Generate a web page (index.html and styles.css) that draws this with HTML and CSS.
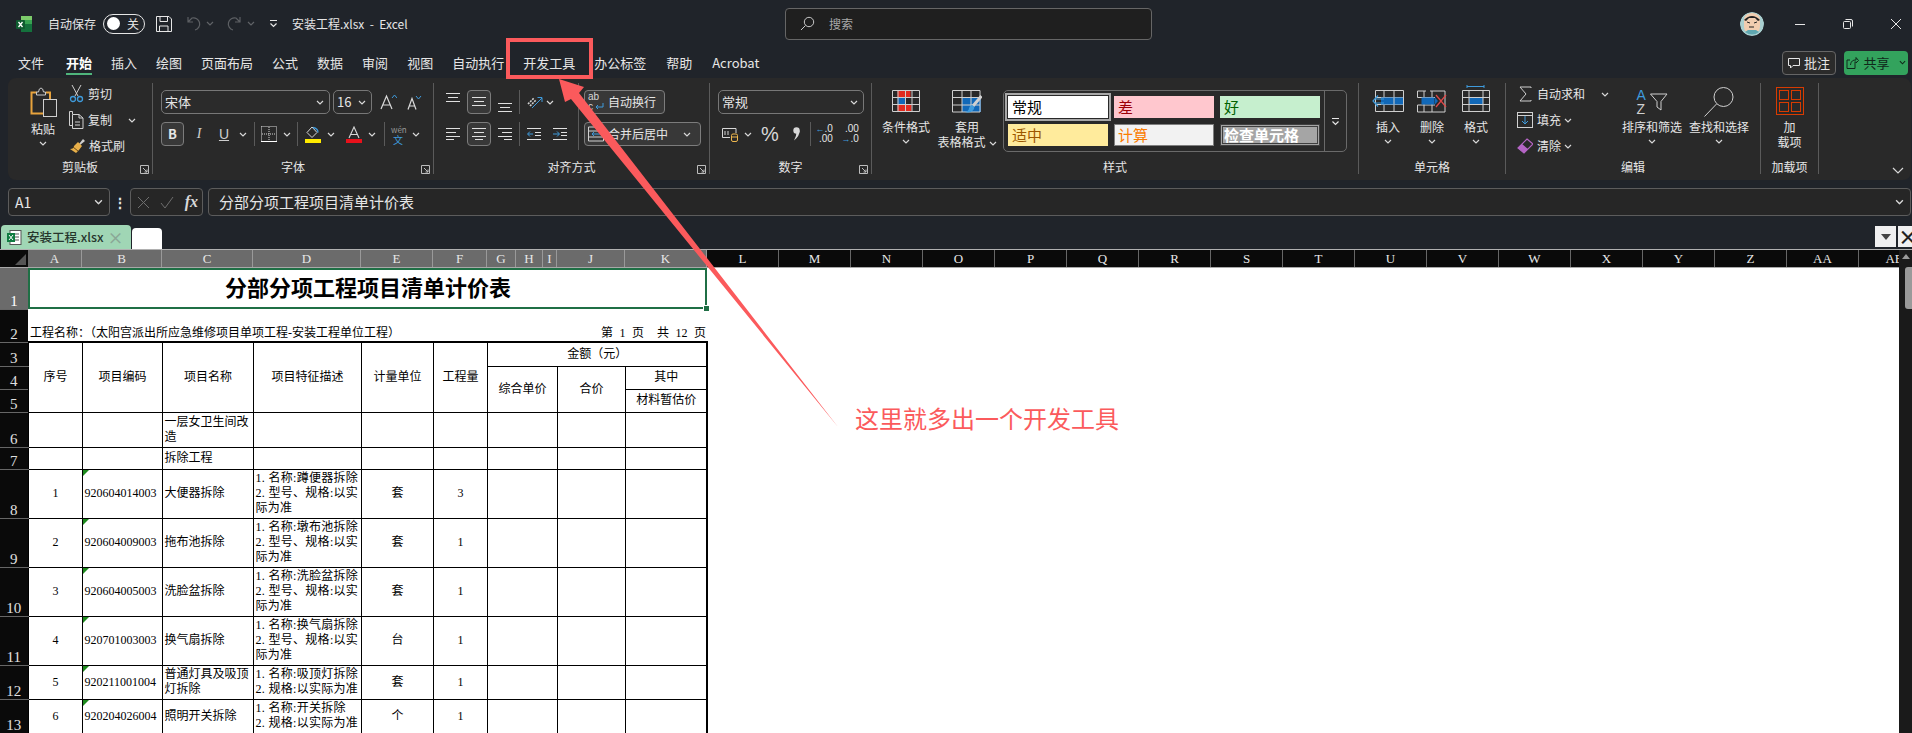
FILE: index.html
```html
<!DOCTYPE html>
<html lang="zh-CN">
<head>
    <meta charset="utf-8">
    <title>安装工程.xlsx - Excel</title>
    <link rel="stylesheet" href="styles.css">
</head>
<body>

<svg class="sprite" aria-hidden="true">
    <symbol id="chev" viewBox="0 0 8 5"><path d="M1 1l3 3 3-3" fill="none" stroke="#d8d8d8" stroke-width="1.2"/></symbol>
    <symbol id="launch" viewBox="0 0 9 9"><path d="M.5 8.500V.5H8.500V8.500H.5M3 3l4 4M7 4.500V7H4.500" fill="none" stroke="#bdbdbd"/></symbol>
</svg>

<!-- title bar -->
<header class="titlebar">
    <div class="title-left">
        <svg class="logo" width="16" height="16" viewBox="0 0 16 16">
            <rect x="5" width="11" height="8" fill="#7ccb6a"/><rect x="5" y="4" width="11" height="8" fill="#37a352"/><rect x="5" y="8" width="11" height="8" fill="#14713c"/><rect y="4" width="9" height="9" rx="1" fill="#0e5c2f"/>
            <path d="M2.500 6l4 5M6.500 6l-4 5" stroke="#fff" stroke-width="1.300"/>
        </svg>
        <span class="ml16">自动保存</span>
        <span class="toggle ml7"><i></i><b>关</b></span>
        <svg class="ml11" width="16" height="16" viewBox="0 0 16 16" fill="none" stroke="#e6e6e6"><path d="M.5.500H13L15.500 3V15.500H.5Z"/><path d="M4 .5V5.500H11.500V.5M3.500 15.500V10H12V15.500"/></svg>
        <svg class="ml15" width="15" height="15" viewBox="0 0 15 15" fill="none" stroke="#5c5f63" stroke-width="1.200"><path d="M1 1V6H6M1 6l4-4A6 6 0 1 1 8 14"/></svg>
        <svg class="ml4" width="8" height="5"><use href="#chev" opacity=".35"/></svg>
        <svg class="ml12" width="15" height="15" viewBox="0 0 15 15" fill="none" stroke="#5c5f63" stroke-width="1.200"><path d="M14 1V6H9M14 6l-4-4A6 6 0 1 0 7 14"/></svg>
        <svg class="ml6" width="8" height="5"><use href="#chev" opacity=".35"/></svg>
        <svg class="ml14" width="9" height="9" viewBox="0 0 9 9" fill="none" stroke="#e6e6e6" stroke-width="1.200"><path d="M1 1.500H8M1.500 4.500l3 3 3-3"/></svg>
        <span class="ml14">安装工程.xlsx &nbsp;-&nbsp; Excel</span>
    </div>
    <div class="search">
        <svg width="15" height="15" viewBox="0 0 15 15" fill="none" stroke="#c8c8c8"><circle cx="9" cy="6" r="4.700"/><path d="M5.500 9.500L1 14"/></svg>
        <span>搜索</span>
    </div>
    <div class="title-right">
        <svg class="avatar" width="24" height="24" viewBox="0 0 24 24">
            <circle cx="12" cy="12" r="12" fill="#a9cfd0"/><path d="M4 7a8 6 0 0 1 16 0v8a8 7 0 0 1-16 0Z" fill="#f1cdb0"/><path d="M4 8q8-8 16 0l-2 1-3-3-6 0-3 3Z" fill="#222"/>
            <path d="M7 10l3 1M17 10l-3 1M9 15h5" stroke="#222"/><path d="M5 20q7 5 14 0l-3-2H8Z" fill="#5fa7b0"/>
        </svg>
        <div class="winbtn"><svg width="10" height="10"><path d="M0 5.500H10" stroke="#e6e6e6"/></svg></div>
        <div class="winbtn"><svg width="10" height="10" fill="none" stroke="#e6e6e6"><rect x=".5" y="2.500" width="7" height="7" rx="1"/><path d="M2.500 .5H8A1.500 1.500 0 0 1 9.500 2V7.500"/></svg></div>
        <div class="winbtn"><svg width="10" height="10" stroke="#e6e6e6"><path d="M0 0l10 10M10 0L0 10"/></svg></div>
    </div>
</header>

<!-- tabs -->
<nav class="tabbar">
    <a class="first">文件</a>
    <a class="active">开始</a>
    <a>插入</a>
    <a>绘图</a>
    <a>页面布局</a>
    <a>公式</a>
    <a>数据</a>
    <a>审阅</a>
    <a>视图</a>
    <a>自动执行</a>
    <a>开发工具</a>
    <a>办公标签</a>
    <a class="late">帮助</a>
    <a class="late">Acrobat</a>
    <div class="tab-actions">
        <button class="note">
            <svg width="12" height="12" viewBox="0 0 12 12" fill="none" stroke="#e6e6e6"><path d="M.5 1.500H11.500V8.500H5L2.500 11V8.500H.5Z"/></svg>批注
        </button>
        <button class="share">
            <svg width="13" height="13" viewBox="0 0 13 13" fill="none" stroke="#10281a"><path d="M9 5.500V12.500H1V4H4M4.500 9C5 5 7 4 10 4V1.500L12.500 4.500 10 7V5.500"/></svg>共享<svg class="ml5" width="7" height="5" viewBox="0 0 8 5"><path d="M1 1l3 3 3-3" fill="none" stroke="#10281a" stroke-width="1.200"/></svg>
        </button>
    </div>
</nav>

<!-- ribbon -->
<section class="ribbon">
    <div class="group w-clip">
        <div class="gbody pl21">
            <div class="paste">
                <svg width="27" height="30" viewBox="0 0 27 30" fill="none">
                    <path d="M7 5.500H1.500V26.500H13M16 5.500H20V12" stroke="#e8a33d" stroke-width="2"/>
                    <path d="M6.500 8V5H8.500Q9 1 11 1T13.500 5H15.500V8Z" stroke="#c9c9c9" stroke-width="1"/>
                    <rect x="13.500" y="12.500" width="13" height="17" stroke="#d0d0d0" fill="#292929"/>
                </svg>
                <span class="mt4">粘贴</span>
                <svg class="mt4" width="8" height="5"><use href="#chev"/></svg>
            </div>
            <div class="smalls ml12">
                <div class="small">
                    <svg width="15" height="18" viewBox="0 0 15 18" fill="none"><path d="M3 0l6 11M12 0L6 11" stroke="#cfcfcf"/><circle cx="4" cy="14" r="2.500" stroke="#3f9bdc" stroke-width="1.300"/><circle cx="11" cy="14" r="2.500" stroke="#3f9bdc" stroke-width="1.300"/></svg>
                    <span class="ml4">剪切</span>
                </div>
                <div class="small">
                    <svg width="15" height="18" viewBox="0 0 15 18" fill="none" stroke="#d0d0d0"><path d="M3.500 3V.5H.5V14.500H3"/><path d="M3.500 3.500H10L14 7V17.500H3.500Z"/><path d="M10 3.500V7H14M6 11H11M6 14H11"/></svg>
                    <span class="ml4">复制</span>
                    <svg class="ml16" width="8" height="5"><use href="#chev"/></svg>
                </div>
                <div class="small">
                    <svg width="16" height="16" viewBox="0 0 16 16"><path d="M10 6l4-5 2 2-5 4Z" fill="#cfcfcf"/><path d="M9 4l4 4-3 4-3 3-6-4q4 0 4-3Z" fill="#e8b04a"/><path d="M4 9l5 4" stroke="#6d4a12"/></svg>
                    <span class="ml4">格式刷</span>
                </div>
            </div>
        </div>
        <div class="glabel">剪贴板</div>
        <svg class="launcher" width="9" height="9"><use href="#launch"/></svg>
    </div>

    <div class="group w-font">
        <div class="rows pl8">
            <div class="row">
                <div class="select w169">宋体<svg width="8" height="5"><use href="#chev"/></svg></div>
                <div class="select w39 ml3">16<svg width="8" height="5"><use href="#chev"/></svg></div>
                <svg class="ml8" width="17" height="16" viewBox="0 0 17 16" fill="none"><path d="M1 15L6.500 2 12 15M3 11H10" stroke="#dadada" stroke-width="1.200"/><path d="M12 4l2.500-3 2.500 3" stroke="#3f9bdc"/></svg>
                <svg class="ml10" width="15" height="15" viewBox="0 0 15 15" fill="none"><path d="M1 14.500L5 3.500 9 14.500M2.500 11H7.500" stroke="#dadada" stroke-width="1.200"/><path d="M9 1l2.500 3L14 1" stroke="#3f9bdc"/></svg>
            </div>
            <div class="row">
                <div class="tbtn w23 bold">B</div>
                <div class="ico w10 ml10 ital">I</div>
                <div class="ico w12 ml14 under">U</div>
                <svg class="ml9" width="8" height="5"><use href="#chev"/></svg>
                <i class="sep ml7"></i>
                <svg class="ml6" width="16" height="16" viewBox="0 0 16 16" fill="none" stroke="#d8d8d8"><path d="M.5.500H15.500V15M.5.500V15" stroke-dasharray="1 1"/><path d="M8 1V15M1 8H15" stroke-dasharray="1 1"/><path d="M0 15.500H16" stroke="#fff"/></svg>
                <svg class="ml6" width="8" height="5"><use href="#chev"/></svg>
                <i class="sep ml6"></i>
                <svg class="ml7" width="16" height="17" viewBox="0 0 16 17" fill="none"><path d="M7 1L2 6.500 7 11.500 12 6.500Z" stroke="#d8d8d8"/><path d="M8 1.500q5 1 5 5" stroke="#3f9bdc" stroke-width="1.300"/><rect y="13" width="16" height="4" fill="#ffeb00"/></svg>
                <svg class="ml6" width="8" height="5"><use href="#chev"/></svg>
                <svg class="ml11" width="16" height="17" viewBox="0 0 16 17" fill="none"><path d="M3 12L8 1 13 12M4.500 8.500H11.500" stroke="#d8d8d8" stroke-width="1.100"/><rect y="13" width="16" height="4" fill="#e8111b"/></svg>
                <svg class="ml6" width="8" height="5"><use href="#chev"/></svg>
                <i class="sep ml8"></i>
                <div class="wen ml6"><small>wén</small><b>文</b></div>
                <svg class="ml7" width="8" height="5"><use href="#chev"/></svg>
            </div>
        </div>
        <div class="glabel">字体</div>
        <svg class="launcher" width="9" height="9"><use href="#launch"/></svg>
    </div>

    <div class="group w-align">
        <div class="gbody">
            <div class="rows w145 pl12">
                <div class="row">
                    <svg class="self-top" width="14" height="10" stroke="#e0e0e0"><path d="M0 .5H14M2 4.500H12M0 8.500H14"/></svg>
                    <div class="tbtn w24 ml7"><svg width="14" height="10" stroke="#e0e0e0"><path d="M0 .5H14M2 4.500H12M0 8.500H14"/></svg></div>
                    <svg class="self-bot ml7" width="14" height="10" stroke="#e0e0e0"><path d="M0 .5H14M2 4.500H12M0 8.500H14"/></svg>
                    <i class="sep ml7"></i>
                    <svg class="ml7" width="16" height="16" viewBox="0 0 16 16" fill="none"><path d="M1 10l6-6M3 12l6-6" stroke="#d0d0d0" stroke-width="1.600" stroke-dasharray="2 1"/><path d="M5 14L15 4M10.500 3.500H15V8" stroke="#3f9bdc"/></svg>
                    <svg class="ml3" width="8" height="5"><use href="#chev"/></svg>
                </div>
                <div class="row">
                    <svg width="14" height="12" stroke="#e0e0e0"><path d="M0 .5H14M0 4.500H10M0 8.500H14M0 11.500H8"/></svg>
                    <div class="tbtn w24 ml7"><svg width="14" height="12" stroke="#e0e0e0"><path d="M0 .5H14M2 4.500H12M0 8.500H14M3 11.500H11"/></svg></div>
                    <svg class="ml7" width="14" height="12" stroke="#e0e0e0"><path d="M0 .5H14M4 4.500H14M0 8.500H14M6 11.500H14"/></svg>
                    <i class="sep ml7"></i>
                    <svg class="ml7" width="14" height="12" fill="none" stroke="#e0e0e0"><path d="M0 .5H14M8 4.500H14M8 7.500H14M0 11.500H14"/><path d="M6 6H1M3 3.500L.5 6 3 8.500" stroke="#3f9bdc"/></svg>
                    <svg class="ml12" width="14" height="12" fill="none" stroke="#e0e0e0"><path d="M0 .5H14M8 4.500H14M8 7.500H14M0 11.500H14"/><path d="M0 6H6M4 3.500L6.500 6 4 8.500" stroke="#3f9bdc"/></svg>
                </div>
            </div>
            <div class="rows wrap-col">
                <div class="row">
                    <div class="tbtn w81 txt">
                        <span class="wrap-ico"><span>ab</span><span>c</span><svg width="9" height="8" viewBox="0 0 9 8" fill="none"><path d="M8 0V4H1M3 2L1 4 3 6" stroke="#3f9bdc"/></svg></span>
                        自动换行
                    </div>
                </div>
                <div class="row">
                    <div class="tbtn w117 txt">
                        <svg width="16" height="16" viewBox="0 0 16 16" fill="none" stroke="#d0d0d0"><path d="M.5 1V15H15.500V1Z"/><path d="M1 5H15M1 11H15"/><path d="M13 8H4M6 6L4 8 6 10" stroke="#3f9bdc"/></svg>
                        合并后居中<svg class="ml11" width="8" height="5"><use href="#chev"/></svg>
                    </div>
                </div>
            </div>
        </div>
        <div class="glabel">对齐方式</div>
        <svg class="launcher" width="9" height="9"><use href="#launch"/></svg>
    </div>

    <div class="group w-num">
        <div class="rows pl8">
            <div class="row">
                <div class="select w146">常规<svg width="8" height="5"><use href="#chev"/></svg></div>
            </div>
            <div class="row">
                <svg class="ml4" width="16" height="16" viewBox="0 0 16 16" fill="none"><path d="M8 11.500H.5V2.500H14V7" stroke="#d8d8d8"/><path d="M3 5V9M6 5V9" stroke="#d8d8d8"/><rect x="9.500" y="8" width="6" height="7.500" rx="1.500" stroke="#efb84f" fill="#292929"/><path d="M9.500 11H15.500" stroke="#efb84f"/></svg>
                <svg class="ml6" width="8" height="5"><use href="#chev"/></svg>
                <span class="percent ml9">%</span>
                <svg class="ml13" width="8" height="14" viewBox="0 0 8 14"><circle cx="4.500" cy="3.500" r="3.200" fill="#d8d8d8"/><path d="M7.700 3.500Q7.700 9 2 13.500 4.500 9 4.500 5Z" fill="#d8d8d8"/></svg>
                <i class="sep ml10"></i>
                <div class="dec ml6"><span><em>←</em>.0</span><span>.00</span></div>
                <div class="dec ml10"><span>.00</span><span><em>→</em>.0</span></div>
            </div>
        </div>
        <div class="glabel">数字</div>
        <svg class="launcher" width="9" height="9"><use href="#launch"/></svg>
    </div>

    <div class="group w-style">
        <div class="gbody pl10">
            <div class="big w48">
                <div class="icon-box">
                    <svg width="28" height="22" viewBox="0 0 28 22" fill="none">
                        <rect x="5.500" y=".5" width="13" height="6.500" fill="#e12b1f"/><rect x="5.500" y="7.500" width="8" height="6.500" fill="#1168b8"/><rect x="5.500" y="14.500" width="14" height="7" fill="#e12b1f"/>
                        <path d="M.5.500H27.500V21.500H.5ZM.5 7.500H27.500M.5 14.500H27.500M6 .5V21.500M13.500 .5V21.500M20 .5V21.500" stroke="#cfcfcf"/>
                    </svg>
                </div>
                <span>条件格式</span>
                <svg class="mt5" width="8" height="5"><use href="#chev"/></svg>
            </div>
            <div class="big w64 ml5">
                <div class="icon-box">
                    <svg width="30" height="27" viewBox="0 0 30 27" fill="none">
                        <rect x="10" y="8" width="19" height="14" fill="#1168b8"/>
                        <path d="M.5.500H28V22H.5ZM.5 7.500H28M.5 15H28M10 .5V22M19 .5V22" stroke="#cfcfcf"/>
                        <path d="M29.500 6L21 16" stroke="#d0d0d0" stroke-width="3"/><path d="M20 15q3 1 2 4-3 5-9 3 4-1 4-4 1-3 3-3Z" fill="#3f9bdc"/>
                    </svg>
                </div>
                <span>套用</span>
                <span>表格格式<svg class="ml3 va" width="8" height="5"><use href="#chev"/></svg></span>
            </div>
            <div class="gallery ml4">
                <div class="gallery-grid">
                    <div class="sty sty-normal">常规</div>
                    <div class="sty sty-bad">差</div>
                    <div class="sty sty-good">好</div>
                    <div class="sty sty-mid">适中</div>
                    <div class="sty sty-calc">计算</div>
                    <div class="sty sty-check">检查单元格</div>
                </div>
                <div class="gallery-more">
                    <svg width="9" height="9" viewBox="0 0 9 9" fill="none" stroke="#e6e6e6" stroke-width="1.200"><path d="M1 1.500H8M1.500 4.500l3 3 3-3"/></svg>
                </div>
            </div>
        </div>
        <div class="glabel">样式</div>
    </div>

    <div class="group w-cell">
        <div class="gbody pl7">
            <div class="big w44">
                <div class="icon-box">
                    <svg width="32" height="22" viewBox="0 0 32 22" fill="none">
                        <path d="M3.500.5H31.500V21.500H3.500ZM3.500 7.500H31.500M3.500 14.500H31.500M12 .5V21.500M22 .5V21.500" stroke="#cfcfcf"/>
                        <rect x="9" y="7.500" width="22" height="7" fill="#1168b8"/><path d="M22 7.500V14.500" stroke="#cfcfcf"/>
                        <path d="M12 9H3M12 13H3M6 5.500L1 11 6 16.500" stroke="#3f9bdc" stroke-width="1.200"/>
                    </svg>
                </div>
                <span>插入</span>
                <svg class="mt5" width="8" height="5"><use href="#chev"/></svg>
            </div>
            <div class="big w44">
                <div class="icon-box">
                    <svg width="30" height="24" viewBox="0 0 30 24" fill="none">
                        <path d="M.5 1H9M13 1H28M.5 1V7.500M.5 15V22H28V1M.5 7.500H18M.5 15H18M7 1V22M15 1V22" stroke="#cfcfcf"/>
                        <rect x="4.500" y="7.500" width="13" height="7" fill="#1168b8"/><path d="M18 7.500L21 11 18 14.500Z" fill="#1168b8"/>
                        <path d="M19 5l10 12M29 5L19 17" stroke="#e04848" stroke-width="1.200"/>
                    </svg>
                </div>
                <span>删除</span>
                <svg class="mt5" width="8" height="5"><use href="#chev"/></svg>
            </div>
            <div class="big w44">
                <div class="icon-box">
                    <svg class="up5" width="28" height="27" viewBox="0 0 28 27" fill="none">
                        <path d="M5 1.500H22M5 0V3M22 0V3" stroke="#3f9bdc"/>
                        <rect x="7" y="12.500" width="14" height="7" fill="#1168b8"/>
                        <path d="M.5 5.500H27.500V26.500H.5ZM.5 12.500H27.500M.5 19.500H27.500M7 5.500V26.500M21 5.500V26.500" stroke="#cfcfcf"/>
                    </svg>
                </div>
                <span>格式</span>
                <svg class="mt5" width="8" height="5"><use href="#chev"/></svg>
            </div>
        </div>
        <div class="glabel">单元格</div>
    </div>

    <div class="group w-edit">
        <div class="gbody pl11">
            <div class="smalls w94">
                <div class="small">
                    <svg width="16" height="16" viewBox="0 0 16 16" fill="none" stroke="#d0d0d0"><path d="M14 2V1H3L9 8 3 15H14V14"/></svg>
                    <span class="ml4">自动求和</span>
                    <svg class="ml16" width="8" height="5"><use href="#chev"/></svg>
                </div>
                <div class="small">
                    <svg width="16" height="16" viewBox="0 0 16 16" fill="none"><rect x=".5" y=".5" width="15" height="15" stroke="#d0d0d0"/><path d="M8 4V12M5 9l3 3 3-3" stroke="#3f9bdc"/><path d="M.5 3.500H15.500" stroke="#d0d0d0"/></svg>
                    <span class="ml4">填充</span>
                    <svg class="ml3" width="8" height="5"><use href="#chev"/></svg>
                </div>
                <div class="small">
                    <svg width="16" height="16" viewBox="0 0 16 16"><path d="M10 1L16 6 7 15 1 10Z" fill="none" stroke="#b565c5" stroke-width="1.200"/><path d="M5 6L11 11 7 15 1 10Z" fill="#b565c5"/></svg>
                    <span class="ml4">清除</span>
                    <svg class="ml3" width="8" height="5"><use href="#chev"/></svg>
                </div>
            </div>
            <div class="big w60 ml11">
                <div class="icon-box sort-ico">
                    <span class="az"><b>A</b><i>Z</i></span>
                    <svg width="18" height="18" viewBox="0 0 18 18" fill="none"><path d="M.5 1H17L11 8.500V17L7 14V8.500Z" stroke="#d0d0d0"/></svg>
                </div>
                <span>排序和筛选</span>
                <svg class="mt5" width="8" height="5"><use href="#chev"/></svg>
            </div>
            <div class="big w60 ml7">
                <div class="icon-box">
                    <svg class="up3" width="30" height="30" viewBox="0 0 30 30" fill="none" stroke="#d0d0d0"><circle cx="19.500" cy="10" r="9.500"/><path d="M12.500 17L.5 29.500"/></svg>
                </div>
                <span>查找和选择</span>
                <svg class="mt5" width="8" height="5"><use href="#chev"/></svg>
            </div>
        </div>
        <div class="glabel">编辑</div>
    </div>

    <div class="group w-add">
        <div class="gbody center">
            <div class="big">
                <div class="icon-box">
                    <svg class="up3" width="28" height="28" viewBox="0 0 28 28" fill="none" stroke="#d83b01"><rect x=".5" y=".5" width="27" height="27" stroke-width="1"/><rect x="3.500" y="3.500" width="9" height="9"/><rect x="15.500" y="3.500" width="9" height="9"/><rect x="3.500" y="15.500" width="9" height="9"/><rect x="15.500" y="15.500" width="9" height="9"/></svg>
                </div>
                <span>加</span>
                <span>载项</span>
            </div>
        </div>
        <div class="glabel">加载项</div>
    </div>

    <svg class="collapse" width="12" height="7" viewBox="0 0 12 7"><path d="M1 1l5 5 5-5" fill="none" stroke="#d8d8d8" stroke-width="1.2"/></svg>
</section>

<!-- formula bar -->
<div class="formula-bar">
    <div class="namebox">A1<svg width="9" height="6" viewBox="0 0 8 5"><use href="#chev"/></svg></div>
    <div class="dots">⋮</div>
    <div class="fx-box">
        <svg width="13" height="13" stroke="#6e6e6e"><path d="M1 1l11 11M12 1L1 12"/></svg>
        <svg width="14" height="13" fill="none" stroke="#6e6e6e"><path d="M1 7l4 5 8-11"/></svg>
        <span>fx</span>
    </div>
    <div class="formula">分部分项工程项目清单计价表<svg width="9" height="6" viewBox="0 0 8 5"><use href="#chev"/></svg></div>
</div>

<!-- workbook tabs -->
<div class="doc-tabs">
    <div class="doc-tab">
        <svg width="15" height="15" viewBox="0 0 15 15"><rect x="3" y=".5" width="11" height="14" fill="#fff" stroke="#555"/><path d="M6 4H12M6 7H12M6 10H12" stroke="#555"/><rect y="3" width="8" height="9" fill="#107c41"/><path d="M2 5l4 5M6 5l-4 5" stroke="#fff"/></svg>
        <span>安装工程.xlsx</span>
        <i>×</i>
    </div>
    <div class="doc-tab-new"></div>
    <div class="doc-tools">
        <div class="doc-btn"><span></span></div>
        <div class="doc-btn x">×</div>
    </div>
</div>

<!-- sheet -->
<main class="sheet">
    <div class="sheet-main">
        <div class="col-head">
            <div class="corner"></div>
            <div class="col sel ca">A</div><div class="col sel cb">B</div><div class="col sel cc">C</div><div class="col sel cd">D</div><div class="col sel ce">E</div><div class="col sel cf">F</div><div class="col sel cg">G</div><div class="col sel ch">H</div><div class="col sel ci">I</div><div class="col sel cj">J</div><div class="col sel ck">K</div>
            <div class="col">L</div><div class="col">M</div><div class="col">N</div><div class="col">O</div><div class="col">P</div><div class="col">Q</div><div class="col">R</div><div class="col">S</div><div class="col">T</div><div class="col">U</div><div class="col">V</div><div class="col">W</div><div class="col">X</div><div class="col">Y</div><div class="col">Z</div><div class="col">AA</div><div class="col">AB</div>
        </div>
        <table class="grid">
            <colgroup>
                <col class="c-head"><col class="c-a"><col class="c-b"><col class="c-c"><col class="c-d"><col class="c-e"><col class="c-f"><col class="c-g"><col class="c-h"><col class="c-i"><col class="c-j"><col class="c-k"><col>
            </colgroup>
            <tr class="r1"><th class="sel">1</th><td colspan="11" class="title-cell">分部分项工程项目清单计价表<i class="handle"></i></td><td></td></tr>
            <tr class="r2"><th>2</th><td colspan="9" class="info">工程名称：（太阳宫派出所应急维修项目单项工程-安装工程单位工程）</td><td colspan="2" class="info right">第 1 页 &nbsp;共 12 页</td><td></td></tr>
            <tr class="r3"><th>3</th>
                <td class="b top ctr" rowspan="3">序号</td><td class="b top ctr" rowspan="3">项目编码</td><td class="b top ctr" rowspan="3">项目名称</td><td class="b top ctr" rowspan="3">项目特征描述</td><td class="b top ctr" rowspan="3">计量单位</td><td class="b top ctr" rowspan="3">工程量</td>
                <td class="b top ctr end" colspan="5">金额（元）</td><td></td></tr>
            <tr class="r4"><th>4</th><td class="b ctr" colspan="3" rowspan="2">综合单价</td><td class="b ctr" rowspan="2">合价</td><td class="b ctr end">其中</td><td></td></tr>
            <tr class="r5"><th>5</th><td class="b ctr end">材料暂估价</td><td></td></tr>
            <tr class="r6"><th>6</th><td class="b"></td><td class="b"></td><td class="b">一层女卫生间改造</td><td class="b"></td><td class="b"></td><td class="b"></td><td class="b" colspan="3"></td><td class="b"></td><td class="b end"></td><td></td></tr>
            <tr class="r7"><th>7</th><td class="b"></td><td class="b"></td><td class="b">拆除工程</td><td class="b"></td><td class="b"></td><td class="b"></td><td class="b" colspan="3"></td><td class="b"></td><td class="b end"></td><td></td></tr>
            <tr class="r8"><th>8</th><td class="b ctr">1</td><td class="b code">920604014003</td><td class="b">大便器拆除</td><td class="b desc">1. 名称:蹲便器拆除<br>2. 型号、规格:以实<br>际为准</td><td class="b ctr">套</td><td class="b ctr">3</td><td class="b" colspan="3"></td><td class="b"></td><td class="b end"></td><td></td></tr>
            <tr class="r8"><th>9</th><td class="b ctr">2</td><td class="b code">920604009003</td><td class="b">拖布池拆除</td><td class="b desc">1. 名称:墩布池拆除<br>2. 型号、规格:以实<br>际为准</td><td class="b ctr">套</td><td class="b ctr">1</td><td class="b" colspan="3"></td><td class="b"></td><td class="b end"></td><td></td></tr>
            <tr class="r8"><th>10</th><td class="b ctr">3</td><td class="b code">920604005003</td><td class="b">洗脸盆拆除</td><td class="b desc">1. 名称:洗脸盆拆除<br>2. 型号、规格:以实<br>际为准</td><td class="b ctr">套</td><td class="b ctr">1</td><td class="b" colspan="3"></td><td class="b"></td><td class="b end"></td><td></td></tr>
            <tr class="r8"><th>11</th><td class="b ctr">4</td><td class="b code">920701003003</td><td class="b">换气扇拆除</td><td class="b desc">1. 名称:换气扇拆除<br>2. 型号、规格:以实<br>际为准</td><td class="b ctr">台</td><td class="b ctr">1</td><td class="b" colspan="3"></td><td class="b"></td><td class="b end"></td><td></td></tr>
            <tr class="r12"><th>12</th><td class="b ctr">5</td><td class="b code">920211001004</td><td class="b">普通灯具及吸顶灯拆除</td><td class="b desc">1. 名称:吸顶灯拆除<br>2. 规格:以实际为准</td><td class="b ctr">套</td><td class="b ctr">1</td><td class="b" colspan="3"></td><td class="b"></td><td class="b end"></td><td></td></tr>
            <tr class="r12"><th>13</th><td class="b ctr">6</td><td class="b code">920204026004</td><td class="b">照明开关拆除</td><td class="b desc">1. 名称:开关拆除<br>2. 规格:以实际为准</td><td class="b ctr">个</td><td class="b ctr">1</td><td class="b" colspan="3"></td><td class="b"></td><td class="b end"></td><td></td></tr>
        </table>
    </div>
    <div class="scrollbar"><i class="up"></i><i class="thumb"></i></div>
</main>

<!-- annotation drawn on top of the screenshot -->
<div class="mark-box"></div>
<svg class="mark-arrow" width="1912" height="733" viewBox="0 0 1912 733">
    <polygon points="559,79 584,87 579,93 838,427 571,99 565,102" fill="#fb5a5c"/>
</svg>
<div class="mark-text">这里就多出一个开发工具</div>

</body>
</html>
```

FILE: styles.css
```css
* {
    box-sizing: border-box;
}

html, body {
    margin: 0;
    padding: 0;
    width: 1912px;
    height: 733px;
    overflow: hidden;
}

body {
    position: relative;
    background-color: #20242a;
    color: #e6e6e6;
    font-family: "Noto Sans CJK SC", "Noto Sans", sans-serif;
    font-size: 12px;
    line-height: 16px;
}

svg {
    display: block;
    flex-shrink: 0;
}

.sprite {
    width: 0;
    height: 0;
    position: absolute;
}

/* small spacing helpers */
.ml3 { margin-left: 3px; }
.ml4 { margin-left: 4px; }
.ml5 { margin-left: 5px; }
.ml6 { margin-left: 6px; }
.ml7 { margin-left: 7px; }
.ml8 { margin-left: 8px; }
.ml9 { margin-left: 9px; }
.ml10 { margin-left: 10px; }
.ml11 { margin-left: 11px; }
.ml12 { margin-left: 12px; }
.ml13 { margin-left: 13px; }
.ml14 { margin-left: 14px; }
.ml15 { margin-left: 15px; }
.ml16 { margin-left: 16px; }
.mt4 { margin-top: 4px; }
.mt5 { margin-top: 5px; }
.pl7 { padding-left: 7px; }
.pl8 { padding-left: 8px; }
.pl10 { padding-left: 10px; }
.pl11 { padding-left: 11px; }
.pl12 { padding-left: 12px; }
.pl21 { padding-left: 21px; }
.w10 { width: 10px; }
.w12 { width: 12px; }
.w23 { width: 23px; }
.w24 { width: 24px; }
.w39 { width: 39px; }
.w44 { width: 44px; }
.w48 { width: 48px; }
.w60 { width: 60px; }
.w64 { width: 64px; }
.w81 { width: 81px; }
.w94 { width: 94px; }
.w117 { width: 117px; }
.w145 { width: 145px; }
.w146 { width: 146px; }
.w169 { width: 169px; }
.up3 { margin-top: -3px; }
.up5 { margin-top: -5px; }
.va { display: inline-block; vertical-align: middle; }

/* title bar */
.titlebar {
    display: flex;
    align-items: center;
    height: 47px;
}

.title-left {
    display: flex;
    align-items: center;
    width: 785px;
    padding-left: 16px;
}

.toggle {
    display: flex;
    align-items: center;
    justify-content: space-between;
    width: 42px;
    height: 20px;
    padding: 0 5px 0 3px;
    border: 1px solid #e6e6e6;
    border-radius: 10px;
}

.toggle i {
    width: 13px;
    height: 13px;
    background-color: #fff;
    border-radius: 50%;
}

.toggle b {
    font-weight: normal;
}

.search {
    display: flex;
    align-items: center;
    gap: 14px;
    width: 367px;
    height: 32px;
    padding-left: 14px;
    background-color: #1f1f1f;
    border: 1px solid #666;
    border-radius: 4px;
    color: #a8a8a8;
}

.title-right {
    flex: 1;
    display: flex;
    align-items: center;
    justify-content: flex-end;
    margin-right: -8px;
}

.avatar {
    margin-right: 12px;
    border-radius: 50%;
}

.winbtn {
    display: flex;
    align-items: center;
    justify-content: center;
    width: 48px;
    height: 32px;
}

/* tabs */
.tabbar {
    display: flex;
    align-items: center;
    gap: 19px;
    height: 31px;
    padding-left: 18px;
    font-size: 13px;
    line-height: 20px;
}

.tabbar a {
    position: relative;
    white-space: nowrap;
}

.tabbar .first {
    margin-right: 3px;
}

.tabbar .late {
    margin-left: 1px;
}

.tabbar .active {
    font-weight: bold;
    color: #fff;
}

.tabbar .active::after {
    content: "";
    position: absolute;
    left: 0;
    right: 0;
    bottom: -2px;
    height: 2px;
    background-color: #4fb57c;
}

.tab-actions {
    display: flex;
    gap: 8px;
    margin-left: auto;
    margin-right: 4px;
}

.tab-actions button {
    display: flex;
    align-items: center;
    justify-content: center;
    gap: 4px;
    height: 24px;
    border-radius: 4px;
    font: inherit;
}

.note {
    width: 54px;
    padding: 0;
    background-color: #2b2b2b;
    border: 1px solid #666;
    color: #e6e6e6;
}

.share {
    width: 64px;
    padding: 0;
    background-color: #33a35d;
    border: none;
    color: #10281a;
}

/* ribbon */
.ribbon {
    display: flex;
    height: 102px;
    margin: 0 1px 0 8px;
    padding-top: 5px;
    background-color: #292929;
    border-radius: 8px;
}

.group {
    position: relative;
    display: flex;
    flex-direction: column;
    height: 91px;
    border-right: 1px solid #5a5a5a;
}

.w-clip { width: 145px; }
.w-font { width: 281px; }
.w-align { width: 276px; }
.w-num { width: 162px; }
.w-style { width: 487px; }
.w-cell { width: 147px; }
.w-edit { width: 255px; }
.w-add { width: 58px; }

.gbody {
    flex: 1;
    display: flex;
    min-height: 0;
}

.center {
    justify-content: center;
}

.glabel {
    height: 16px;
    margin-bottom: -1px;
    text-align: center;
    color: #e6e6e6;
}

.launcher {
    position: absolute;
    right: 3px;
    bottom: 0;
}

.collapse {
    align-self: flex-end;
    margin: 0 7px 6px auto;
}

.paste {
    display: flex;
    flex-direction: column;
    align-items: center;
    width: 28px;
    padding-top: 4px;
}

.smalls {
    display: flex;
    flex-direction: column;
    gap: 8px;
    padding-top: 2px;
}

.small {
    display: flex;
    align-items: center;
    height: 18px;
    white-space: nowrap;
}

.rows {
    flex: 1;
    display: flex;
    flex-direction: column;
    gap: 8px;
    padding-top: 7px;
}

.rows.w145 {
    flex: none;
    height: 67px;
    border-right: 1px solid #5a5a5a;
}

.wrap-col {
    padding-left: 5px;
}

.row {
    display: flex;
    align-items: center;
    height: 24px;
}

.select {
    display: flex;
    align-items: center;
    justify-content: space-between;
    height: 24px;
    padding: 0 5px 0 3px;
    background-color: #2b2b2b;
    border: 1px solid #777;
    border-radius: 5px;
    font-size: 13px;
}

.tbtn {
    display: flex;
    align-items: center;
    justify-content: center;
    height: 24px;
    background-color: #383838;
    border: 1px solid #7c7c7c;
    border-radius: 4px;
}

.tbtn.txt {
    justify-content: flex-start;
    gap: 4px;
    padding-left: 3px;
    white-space: nowrap;
}

.wrap-ico {
    position: relative;
    width: 16px;
    height: 20px;
    font-family: "Liberation Sans", sans-serif;
    font-size: 10px;
    line-height: 10px;
    color: #d8d8d8;
}

.wrap-ico span {
    display: block;
}

.wrap-ico svg {
    position: absolute;
    right: 0;
    bottom: 1px;
}

.bold {
    font-weight: bold;
    font-size: 13px;
}

.ico {
    height: 24px;
    line-height: 24px;
    text-align: center;
    font-size: 14px;
    color: #cfcfcf;
}

.ital {
    font-style: italic;
    font-family: "Liberation Serif", serif;
}

.under {
    text-decoration: underline;
    font-family: "Liberation Sans", sans-serif;
}

.sep {
    display: block;
    width: 1px;
    height: 24px;
    background-color: #5a5a5a;
}

.self-top {
    align-self: flex-start;
    margin-top: 3px;
}

.self-bot {
    align-self: flex-end;
    margin-bottom: 1px;
}

.wen {
    width: 14px;
    text-align: center;
    line-height: 9px;
    color: #3f9bdc;
}

.wen small {
    display: block;
    font-size: 8px;
    color: #9a9a9a;
}

.wen b {
    font-weight: normal;
    font-size: 10px;
}

.percent {
    font-size: 20px;
    line-height: 24px;
    font-family: "Liberation Sans", sans-serif;
    color: #d8d8d8;
}

.dec {
    display: flex;
    flex-direction: column;
    align-items: flex-end;
    width: 16px;
    font-family: "Liberation Sans", sans-serif;
    font-size: 10px;
    line-height: 10px;
    white-space: nowrap;
}

.dec em {
    font-style: normal;
    font-size: 9px;
    color: #3f9bdc;
}

.big {
    display: flex;
    flex-direction: column;
    align-items: center;
    padding-top: 7px;
    line-height: 15px;
    white-space: nowrap;
}

.icon-box {
    display: flex;
    justify-content: center;
    height: 26px;
    margin-bottom: 3px;
}

.sort-ico {
    gap: 1px;
}

.az {
    width: 12px;
    margin-top: -2px;
    font-family: "Liberation Sans", sans-serif;
    font-size: 14px;
    line-height: 14px;
}

.az b {
    display: block;
    font-weight: normal;
    color: #3f9bdc;
}

.az i {
    display: block;
    font-style: normal;
    color: #d0d0d0;
}

.sort-ico svg {
    margin-top: 3px;
}

.gallery {
    display: flex;
    width: 344px;
    height: 62px;
    margin-top: 7px;
    border: 1px solid #6a6a6a;
    border-radius: 5px;
}

.gallery-grid {
    display: grid;
    grid-template-columns: repeat(3, 100px);
    grid-auto-rows: 22px;
    gap: 6px;
    width: 320px;
    padding: 5px 0 0 4px;
}

.gallery-more {
    display: flex;
    align-items: center;
    justify-content: center;
    flex: 1;
    border-left: 1px solid #6a6a6a;
}

.sty {
    padding-left: 4px;
    font-size: 15px;
    line-height: 22px;
    white-space: nowrap;
}

.sty-normal { background-color: #fff; color: #000; outline: 2px solid #a8a8a8; outline-offset: 1px; }
.sty-bad { background-color: #ffc7ce; color: #9c0006; }
.sty-good { background-color: #c6efce; color: #006100; }
.sty-mid { background-color: #ffeb9c; color: #9c5700; }
.sty-calc { background-color: #f2f2f2; color: #fa7d00; border: 1px solid #7f7f7f; padding-left: 3px; line-height: 20px; }
.sty-check { background-color: #a5a5a5; color: #fff; border: 3px double #3f3f3f; padding-left: 1px; line-height: 16px; font-weight: bold; }

/* formula bar */
.formula-bar {
    display: flex;
    align-items: center;
    height: 28px;
    margin-top: 8px;
    padding: 0 1px 0 8px;
    font-size: 14px;
}

.namebox, .fx-box, .formula {
    display: flex;
    align-items: center;
    height: 28px;
    background-color: #262626;
    border: 1px solid #5c5c5c;
    border-radius: 4px;
}

.namebox {
    justify-content: space-between;
    width: 102px;
    padding: 0 6px;
}

.dots {
    width: 20px;
    text-align: center;
    font-weight: bold;
}

.fx-box {
    justify-content: space-between;
    width: 73px;
    padding: 0 4px 0 6px;
}

.fx-box span {
    font-family: "Liberation Serif", serif;
    font-style: italic;
    font-weight: bold;
    font-size: 16px;
    color: #d8d8d8;
}

.formula {
    flex: 1;
    justify-content: space-between;
    margin-left: 5px;
    padding: 0 6px 0 10px;
    font-size: 15px;
}

/* workbook tabs */
.doc-tabs {
    display: flex;
    align-items: flex-end;
    height: 34px;
    padding-left: 1px;
    border-bottom: 1px solid #b0b0b0;
}

.doc-tab {
    display: flex;
    align-items: center;
    gap: 5px;
    width: 130px;
    height: 24px;
    padding-left: 6px;
    background-color: #a0d6b5;
    border-radius: 4px 4px 0 0;
    color: #26352c;
    font-size: 12.500px;
    font-weight: 500;
}

.doc-tab i {
    margin-left: -1px;
    font-style: normal;
    font-size: 16px;
    color: #8aa796;
}

.doc-tab-new {
    width: 30px;
    height: 21px;
    margin-left: 1px;
    background-color: #fff;
    border-radius: 4px 4px 0 0;
}

.doc-tools {
    display: flex;
    gap: 2px;
    margin-left: auto;
    margin-bottom: 2px;
}

.doc-btn {
    display: flex;
    align-items: center;
    justify-content: center;
    width: 21px;
    height: 21px;
    background-color: #f0f0f0;
    color: #222;
}

.doc-btn span {
    width: 0;
    height: 0;
    border-left: 5px solid transparent;
    border-right: 5px solid transparent;
    border-top: 6px solid #444;
}

.doc-btn.x {
    width: 14px;
    justify-content: flex-start;
    font-size: 20px;
    font-weight: bold;
}

/* sheet */
.sheet {
    display: flex;
    height: 483px;
    overflow: hidden;
}

.sheet-main {
    flex: 1;
    min-width: 0;
    background-color: #fff;
    overflow: hidden;
}

.col-head {
    display: flex;
    height: 18px;
    background-color: #0a0a0a;
    border-bottom: 1px solid #a8a8a8;
    font-family: "Liberation Serif", serif;
    font-size: 13px;
    line-height: 17px;
    color: #e8e8e8;
}

.corner {
    flex: none;
    position: relative;
    width: 28px;
    background-color: #0a0a0a;
}

.corner::after {
    content: "";
    position: absolute;
    right: 2px;
    bottom: 2px;
    border-left: 11px solid transparent;
    border-bottom: 11px solid #555;
}

.col {
    flex: none;
    width: 72px;
    text-align: center;
    border-right: 1px solid #666;
}

.col.sel {
    background-color: #6b6b6b;
    border-right-color: #999;
}

.ca { width: 54px; }
.cb { width: 80px; }
.cc { width: 91px; }
.cd { width: 108px; }
.ce { width: 72px; }
.cf { width: 54px; }
.cg { width: 29px; }
.ch { width: 27px; }
.ci { width: 14px; }
.cj { width: 68px; }
.ck { width: 82px; }

.grid {
    width: 1899px;
    table-layout: fixed;
    border-collapse: collapse;
    background-color: #fff;
    color: #000;
    font-family: "Liberation Serif", "Noto Sans CJK SC", serif;
    font-size: 12px;
    line-height: 15px;
}

.c-head { width: 28px; }
.c-a { width: 54px; }
.c-b { width: 80px; }
.c-c { width: 91px; }
.c-d { width: 108px; }
.c-e { width: 72px; }
.c-f { width: 54px; }
.c-g { width: 29px; }
.c-h { width: 27px; }
.c-i { width: 14px; }
.c-j { width: 68px; }
.c-k { width: 82px; }

.grid th {
    padding: 0;
    background-color: #0a0a0a;
    border-bottom: 1px solid #666;
    color: #e0e0e0;
    font-size: 15px;
    font-weight: normal;
    vertical-align: bottom;
    text-align: center;
}

.grid th.sel {
    background-color: #6b6b6b;
    color: #fff;
}

.grid td {
    padding: 0 1px 0 2px;
    overflow: hidden;
}

.r1 { height: 41px; }
.r2 { height: 33px; }
.r3 { height: 24px; }
.r4 { height: 23px; }
.r5 { height: 23px; }
.r6 { height: 35px; }
.r7 { height: 22px; }
.r8 { height: 49px; }
.r12 { height: 34px; }

.grid td.title-cell {
    position: relative;
    overflow: visible;
    text-align: center;
    font-size: 22px;
    font-weight: bold;
    box-shadow: inset 0 0 0 2px #1f6f45;
}

.handle {
    position: absolute;
    right: -3px;
    bottom: -3px;
    width: 7px;
    height: 7px;
    background-color: #1f6f45;
    border: 1px solid #fff;
}

.info {
    vertical-align: bottom;
    white-space: nowrap;
}

.right {
    text-align: right;
    word-spacing: 3.5px;
}

.b {
    border: 1px solid #000;
}

.top {
    border-top: 2px solid #000;
}

.end {
    border-right: 2px solid #000;
}

.ctr {
    text-align: center;
}

.desc {
    letter-spacing: 0.3px;
    white-space: nowrap;
}

.code {
    position: relative;
    white-space: nowrap;
    padding-left: 3px;
}

.code::before {
    content: "";
    position: absolute;
    left: 0;
    top: 0;
    border-top: 6px solid #1d8a1d;
    border-right: 6px solid transparent;
}

.scrollbar {
    position: relative;
    flex: none;
    width: 13px;
    background-color: #1a1a1a;
}

.scrollbar .up {
    position: absolute;
    left: 3px;
    top: 4px;
    border-left: 4px solid transparent;
    border-right: 4px solid transparent;
    border-bottom: 5px solid #9a9a9a;
}

.scrollbar .thumb {
    position: absolute;
    left: 6px;
    right: 0;
    top: 17px;
    height: 42px;
    background-color: #9a9a9a;
    border-radius: 3px 0 0 3px;
}

/* annotation */
.mark-box {
    position: absolute;
    left: 506px;
    top: 38px;
    width: 87px;
    height: 41px;
    border: 4px solid #fb5a5c;
}

.mark-arrow {
    position: absolute;
    left: 0;
    top: 0;
}

.mark-text {
    position: absolute;
    left: 855px;
    top: 404px;
    font-size: 24px;
    line-height: 28px;
    color: #fb5a5c;
    white-space: nowrap;
}
```
